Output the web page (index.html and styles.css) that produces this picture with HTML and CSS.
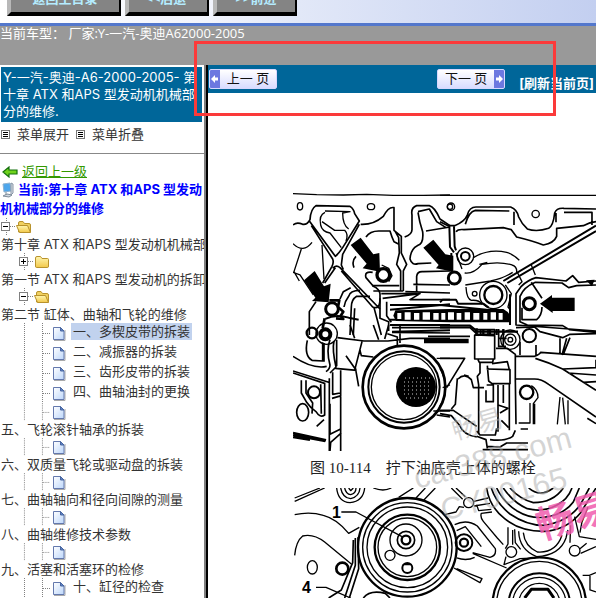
FILE: index.html
```html
<!DOCTYPE html>
<html lang="zh-CN">
<head>
<meta charset="utf-8">
<title>奥迪A6 维修手册</title>
<link rel="stylesheet" href="styles.css">
</head>
<body>
<svg class="defs" aria-hidden="true">
  <defs>
    <linearGradient id="gold" x1="0" y1="0" x2="0" y2="1"><stop offset="0" stop-color="#fff6b0"/><stop offset="1" stop-color="#f2c84a"/></linearGradient>
    <linearGradient id="paper" x1="0" y1="0" x2="1" y2="1"><stop offset="0" stop-color="#fff"/><stop offset="1" stop-color="#bcd6fa"/></linearGradient>
    <symbol id="box" viewBox="0 0 18 18"><path d="M9.500 0V18M13 8.500H18" class="dots"/><rect x="4.500" y="4.500" width="8" height="8" fill="#fff" stroke="#808080"/><path d="M6 8.500H11" stroke="#000"/></symbol>
    <symbol id="plus" viewBox="0 0 18 18"><path d="M9.500 0V18M13 8.500H18" class="dots"/><rect x="4.500" y="4.500" width="8" height="8" fill="#fff" stroke="#808080"/><path d="M6 8.500H11M8.500 6V11" stroke="#000"/></symbol>
    <symbol id="line" viewBox="0 0 18 20"><path d="M9.500 0V20" class="dots"/></symbol>
    <symbol id="branch" viewBox="0 0 18 20"><path d="M9.500 0V20M10 10.500H18" class="dots"/></symbol>
    <symbol id="open" viewBox="0 0 18 18"><path d="M3.500 14V5Q3.500 3.500 5 3.500H8L9.500 5.500H14Q15.500 5.500 15.500 7V14Z" fill="#f0d060" stroke="#b8922c"/><path d="M4.500 14.500 1.500 7.500H12.500L15.500 14.500Z" fill="url(#gold)" stroke="#b8922c"/></symbol>
    <symbol id="folder" viewBox="0 0 18 18"><path d="M2.500 13V5Q2.500 3.500 4 3.500H7.500L9 5.500H14.500Q15.500 5.500 15.500 6.500V13Q15.500 14.500 14.500 14.500H3.500Q2.500 14.500 2.500 13Z" fill="url(#gold)" stroke="#b8922c"/></symbol>
    <symbol id="doc" viewBox="0 0 18 18"><path d="M3 16.500H14V6" stroke="#aaa" fill="none"/><path d="M2.500 3.500H9.500L13 7V15.500H2.500Z" fill="url(#paper)" stroke="#6378ad"/><path d="M9.500 3.500V7H13Z" fill="#5d82c8" stroke="#49669f"/></symbol>
    <symbol id="list" viewBox="0 0 9 9"><rect x=".5" y=".5" width="8" height="8" fill="#fff" stroke="#777"/><path d="M2 2.500H7M2 4.500H7M2 6.500H7" stroke="#000"/></symbol>
  </defs>
</svg>

<header class="toolbar">
  <button class="tool">返回主目录</button>
  <button class="tool">&lt;&lt;后退-</button>
  <button class="tool">&gt;&gt;前进</button>
</header>
<div class="model">当前车型： 厂家:Y-一汽-奥迪A62000-2005</div>

<div class="frames">
  <nav class="side">
    <h1 class="chapter">Y-一汽-奥迪-A6-2000-2005- 第<br>十章 ATX 和APS 型发动机机械部<br>分的维修.</h1>
    <div class="fold">
      <button class="plain"><svg class="list"><use href="#list"/></svg>菜单展开</button>
      <button class="plain"><svg class="list"><use href="#list"/></svg>菜单折叠</button>
    </div>
    <div class="back">
      <svg class="arrow" viewBox="0 0 16 12"><path d="M1 6 7 1V4H15V8H7V11Z" fill="#6fd21c" stroke="#14700c" stroke-width="1.200"/></svg>
      <a href="#up">返回上一级</a>
    </div>
    <div class="current"><svg class="pc" viewBox="0 0 14 16"><path d="M2 2 9 1 10 9 3 10Z" fill="#4da6ec" stroke="#8fb2cf"/><path d="M10 1 12 2V11L10 13Z" fill="#d9e0e8" stroke="#8996a5"/><path d="M5 10V13M2 14 6 12 11 13 8 15Z" fill="#cdd6df" stroke="#7f8c9a"/></svg>当前:第十章 ATX 和APS 型发动<br>机机械部分的维修</div>
    <ul class="tree">
      <li><div class="icons"><svg class="edge"><use href="#box" x="-3" width="18" height="18"/></svg><svg class="cell"><use href="#open"/></svg></div><a href="#c10">第十章 ATX 和APS 型发动机机械部</a></li>
      <li><div class="icons"><i class="edge"></i><svg class="cell"><use href="#plus"/></svg><svg class="cell"><use href="#folder"/></svg></div><a href="#s1">第一节 ATX 和APS 型发动机的拆卸</a></li>
      <li><div class="icons"><i class="edge"></i><svg class="cell"><use href="#box"/></svg><svg class="cell"><use href="#open"/></svg></div><a href="#s2">第二节 缸体、曲轴和飞轮的维修</a></li>
      <li class="inline"><i class="edge"></i><svg class="cell"><use href="#line"/></svg><svg class="cell"><use href="#branch"/></svg><svg class="cell"><use href="#doc"/></svg><a class="selected" href="#p1">一、多楔皮带的拆装</a></li>
      <li class="inline"><i class="edge"></i><svg class="cell"><use href="#line"/></svg><svg class="cell"><use href="#branch"/></svg><svg class="cell"><use href="#doc"/></svg><a href="#p2">二、减振器的拆装</a></li>
      <li class="inline"><i class="edge"></i><svg class="cell"><use href="#line"/></svg><svg class="cell"><use href="#branch"/></svg><svg class="cell"><use href="#doc"/></svg><a href="#p3">三、齿形皮带的拆装</a></li>
      <li class="inline"><i class="edge"></i><svg class="cell"><use href="#line"/></svg><svg class="cell"><use href="#branch"/></svg><svg class="cell"><use href="#doc"/></svg><a href="#p4">四、曲轴油封的更换</a></li>
      <li><div class="icons"><i class="edge"></i><svg class="cell"><use href="#line"/></svg><svg class="cell"><use href="#branch"/></svg><svg class="cell"><use href="#doc"/></svg></div><a href="#p5">五、飞轮滚针轴承的拆装</a></li>
      <li><div class="icons"><i class="edge"></i><svg class="cell"><use href="#line"/></svg><svg class="cell"><use href="#branch"/></svg><svg class="cell"><use href="#doc"/></svg></div><a href="#p6">六、双质量飞轮或驱动盘的拆装</a></li>
      <li><div class="icons"><i class="edge"></i><svg class="cell"><use href="#line"/></svg><svg class="cell"><use href="#branch"/></svg><svg class="cell"><use href="#doc"/></svg></div><a href="#p7">七、曲轴轴向和径向间隙的测量</a></li>
      <li><div class="icons"><i class="edge"></i><svg class="cell"><use href="#line"/></svg><svg class="cell"><use href="#branch"/></svg><svg class="cell"><use href="#doc"/></svg></div><a href="#p8">八、曲轴维修技术参数</a></li>
      <li><div class="icons"><i class="edge"></i><svg class="cell"><use href="#line"/></svg><svg class="cell"><use href="#branch"/></svg><svg class="cell"><use href="#doc"/></svg></div><a href="#p9">九、活塞和活塞环的检修</a></li>
      <li class="inline"><i class="edge"></i><svg class="cell"><use href="#line"/></svg><svg class="cell"><use href="#branch"/></svg><svg class="cell"><use href="#doc"/></svg><a href="#p10">十、缸径的检查</a></li>
    </ul>
  </nav>

  <main class="content">
    <div class="pager">
      <button class="page prev"><svg class="tip" viewBox="0 0 10 16"><path d="M1 8 5 4V6.500H8V9.500H5V12Z" fill="#fff"/></svg><span>上一 页</span></button>
      <button class="page next"><span>下一 页</span><svg class="tip" viewBox="0 0 10 16"><path d="M9 8 5 4V6.500H2V9.500H5V12Z" fill="#fff"/></svg></button>
      <a class="refresh" href="#refresh">[刷新当前页]</a>
    </div>
    <figure class="scan">
      <svg class="drawing" viewBox="293 190 303 261" role="img" aria-label="油底壳上体螺栓位置">
        <g class="ink" transform="translate(290 185) scale(.3333)">
          <path d="M9 26 80 29 160 30 230 28 310 31 400 31 480 30"/>
          <ellipse cx="30" cy="64" rx="8" ry="11"/><ellipse cx="243" cy="65" rx="11" ry="9"/><circle cx="480" cy="65" r="8"/>
          <path d="M9 120Q20 110 38 118Q52 120 60 104Q62 72 78 62L180 64Q192 72 194 86L208 108 158 188Q146 206 136 214L58 108M64 122 128 222Q132 232 126 244L98 294M208 118 158 208 154 240 160 254" stroke-width="5"/>
          <path d="M105 78 180 80 158 84 Q158 120 176 132M105 82Q86 90 92 120Q96 140 120 144L154 188M96 110 134 136H164Q176 148 168 168"/>
          <path d="M128 250Q138 238 150 248L270 372M104 294 136 248M154 258 248 366Q270 376 270 340V326Q268 312 250 304L228 278Q222 258 248 262M212 118Q250 120 280 94Q296 64 312 68V136L334 154V204L350 238 340 258V318M316 140 326 158 328 204 320 238 332 258V318M228 156Q240 138 266 138H300Q306 158 312 170 326 176 328 180M198 214Q184 228 192 248" stroke-width="5"/>
          <path d="M9 176Q40 206 66 172M34 192 12 260 28 288M9 262 30 270 70 330M96 180 102 282"/>
          <path d="M480 122 450 102Q434 66 418 62H380Q362 68 366 90V134Q366 148 344 156M384 80 418 72 440 110 468 128M384 82Q388 110 398 140Q402 178 382 182Q362 192 360 222Q366 242 384 236L424 234M408 138 480 126M380 320V274Q382 258 400 260L480 258M346 320 480 324M370 298 480 300" stroke-width="5"/>
          <path d="M246 302H328M250 318H340M182 308 160 320 150 342M210 316Q180 316 176 334 164 350 162 366M240 334H200Q184 344 184 366L180 450M194 370 190 450M274 326H380M278 340 390 326 360 344H480M270 340V400L296 410V438M290 350V392L304 412 M252 368 274 450M78 350 58 380V450" stroke-width="5"/>
          <circle cx="280" cy="270" r="19" stroke-width="10"/><path d="M275 240 296 250 306 272 296 290"/>
          <circle cx="126" cy="372" r="19" stroke-width="9"/><path d="M118 346H148L144 366 160 380 152 392 160 402 138 400M104 400 98 430" stroke-width="8"/>
          <path d="M106 402Q136 386 176 398L206 404M300 360H480M300 374 480 358M300 404H480M300 420H480M306 440 480 436" stroke-width="6"/>
        </g>
        <g class="solid" transform="translate(290 185) scale(.3333)">
          <path d="M182 180 212 158 250 208 268 204 270 260 218 250 230 236ZM400 188 430 164 466 208 490 212 490 260 438 250 446 240ZM42 286 74 258 102 304 122 296 116 352 66 348 76 338Z"/>
          <path d="M316 376 480 372H640Q652 378 660 390V412H480L318 408 310 392Z"/>
        </g>
        <g class="cells" transform="translate(290 185) scale(.3333)"><path d="M322 384H334V402H322ZM344 382H362V404H344ZM372 384H388V404H372ZM398 382H420V404H398ZM430 384H446V404H430ZM454 384H466V404H454ZM474 382H492V404H474ZM500 384H514V404H500ZM524 382H540V404H524ZM550 384H568V404H550ZM580 384H592V404H580ZM602 382H618V404H602ZM626 384H638V404H626Z"/></g>

        <g class="ink" transform="translate(440 185) scale(.3333)">
          <path d="M0 31H468"/><circle cx="33" cy="65" r="11"/><circle cx="287" cy="87" r="11"/>
          <path d="M0 110 24 122H44Q74 110 82 90Q88 66 108 66H212Q232 74 236 96 246 118 262 132 290 142 326 130 340 122 344 84 350 68 372 70L468 72M76 118Q86 80 106 76L208 78 M48 140Q54 132 72 134L190 128 214 134 230 156Q280 168 310 180 342 174 350 154V130L430 122Q450 112 468 110M222 80V120M372 82H456V120M348 84V112" stroke-width="5"/>
          <path d="M28 122 30 186 42 202M42 124 44 184 48 196M34 204V264" stroke-width="6"/>
          <circle cx="76" cy="214" r="25"/><circle cx="76" cy="214" r="13" stroke-width="6"/><circle cx="43" cy="279" r="18" stroke-width="9"/>
          <path d="M100 218Q146 190 200 202 220 208 238 226M74 264Q100 268 126 238 180 228 216 240 232 244 230 264M118 238 142 232M48 204 66 252M76 300 152 288Q190 280 218 262"/>
          <path d="M468 122 190 288M468 138 202 294" stroke-width="6"/><path d="M232 262 246 290 236 300M274 240 286 270"/>
          <circle cx="104" cy="326" r="7"/><circle cx="160" cy="330" r="27" stroke-width="7"/><circle cx="160" cy="330" r="41"/><path d="M78 306Q80 342 94 346 118 344 126 358M196 300 214 326 204 366 210 374"/>
          <path d="M468 288 416 292 398 272 378 288 288 278Q262 286 244 304L228 326V420L468 438M468 300 410 302 386 308 366 294 286 292Q252 306 240 334V410L262 420 368 422 388 434 468 442M274 292 306 340M246 368V404H290Q306 390 306 366" stroke-width="5"/>
          <circle cx="268" cy="356" r="18" stroke-width="9"/><path d="M210 328V420M0 352 8 344H48L54 356H130L146 368M0 360 140 374" stroke-width="6"/>
          <path d="M0 422H90L112 440H234M110 430V450M130 432V450M150 432V450M170 432V450M190 432V450" stroke-width="7"/>
        </g>
        <path class="solid" transform="translate(440 185) scale(.3333)" d="M300 356 336 330V338H404V378H338V384ZM438 286 464 284 456 304Z"/>

        <g class="ink" transform="translate(290 325) scale(.3333)">
          <circle cx="66" cy="24" r="16" stroke-width="7"/><circle cx="106" cy="28" r="15" stroke-width="12"/><circle cx="110" cy="26" r="32"/>
          <path d="M52 46Q42 92 66 106L98 108V52M102 54V110M120 44Q108 76 120 120 120 132 108 140M132 48Q126 74 138 126L120 144M136 130 200 136M142 38 222 48H294L360 40H480M140 44V124M216 50 196 128 206 184M168 92 196 132M180 0 194 40M250 0 266 44M296 0 284 42M210 76 214 92 250 96M292 26 322 36V60M306 8H480M306 22 480 24M330 0V54" stroke-width="5"/>
          <path d="M9 94Q70 134 110 124M9 138 116 172M9 144 106 176M104 174V270Q90 280 78 260 62 250 50 232L34 204V166M118 160V378M152 136V378M128 142V208L150 204M126 220 154 212M120 236V328L152 312M48 166V204L68 234 66 266M92 178 94 266M80 304 102 284M120 378 122 352 154 324" stroke-width="5"/>
          <circle cx="72" cy="202" r="18" stroke-width="6"/><ellipse cx="38" cy="262" rx="18" ry="26" stroke-width="5"/><path d="M9 324 108 346M9 330 106 348M9 336 60 344" stroke-width="8"/>
          <circle cx="342" cy="186" r="124" stroke-width="8"/><circle cx="342" cy="186" r="107" stroke-width="6"/><circle cx="342" cy="186" r="98"/>
          <path d="M440 100H480M458 188 480 180M440 270 480 276M430 258H480"/>
        </g>
        <circle cx="416" cy="387" r="20"/>
        <path class="mesh" d="M405 378H430M404 382H432M404 386H432M404 390H432M404 394H431M406 398H429"/>

        <g class="ink" transform="translate(440 325) scale(.3333)">
          <path d="M-36 34H90M-36 48H80" stroke-width="5"/><path d="M-48 48H86" stroke-width="14"/><path d="M0 8H90L116 32M104 30V102H164V32ZM114 104 118 112H158L160 102M108 14H164V28H108ZM122 16V28M144 16V28M176 12V66M190 14V66M174 40H200M174 64H198" stroke-width="5"/>
          <circle cx="211" cy="44" r="7"/><circle cx="211" cy="44" r="17"/><circle cx="211" cy="44" r="29"/><path d="M168 70H202L226 88V170M120 114V144L112 154 116 180V328M142 122 146 168 156 176H210V134L140 132M156 116 202 110 208 134M226 164 228 298M140 180H160V230H138V196M174 180V320M190 180V234M208 178V316" stroke-width="5"/>
          <circle cx="268" cy="32" r="20" stroke-width="6"/><path d="M228 8 284 6 300 20 368 38 390 28 468 26M380 40 366 90 M390 38 370 88M240 50V90M228 94H284Q300 88 302 82L468 94M288 94V60M360 40V86M286 100Q326 112 368 132L468 196M228 162H284Q304 162 326 178L468 276M368 132 468 128M384 144 468 150M430 172 468 170M468 104V130M442 280 468 296" stroke-width="5"/>
          <circle cx="260" cy="202" r="20" stroke-width="7"/><path d="M274 182Q294 194 294 218L280 236V298M270 234V294H236M284 236V298M360 216 352 298M368 218 376 298M384 226 384 298M242 312H264"/>
          <path d="M0 100H74L20 188M0 130Q18 160 16 192T0 244M52 160 46 238 34 252M54 162Q74 142 94 164L100 188H132M72 150 86 154M0 256H40L110 304M0 266 34 272 58 300Q70 330 110 336M110 318 120 330H166L170 310M174 240 204 250 180 264M184 286 206 308M110 334 138 344 142 370M150 344Q196 350 218 334L226 316M140 364 180 366 200 354H264M128 374H264" stroke-width="5"/>
        </g>
      </svg>
      <figcaption>图 10-114　拧下油底壳上体的螺栓</figcaption>
      <svg class="drawing" viewBox="293 488 303 110" role="img" aria-label="皮带轮分解图">
        <g class="ink" transform="translate(290 470) scale(.3333)">
          <path d="M14 84 90 54M14 94 104 54M14 134Q60 124 100 136 140 146 176 190L208 172M14 256Q18 214 38 198 70 190 104 216L184 282M326 82 370 54M378 84 406 54M398 94 436 54M140 54Q144 96 180 98 220 94 224 54M152 54Q158 84 182 86 208 80 210 54M164 54Q168 72 182 74 198 70 198 54M176 54 182 62 190 54M250 54Q280 66 304 54" />
          <circle cx="352" cy="232" r="148" stroke-width="7"/><circle cx="352" cy="232" r="134"/><circle cx="352" cy="232" r="121"/><circle cx="352" cy="232" r="98" stroke-width="7"/><circle cx="352" cy="232" r="88"/><circle cx="348" cy="210" r="48"/><circle cx="348" cy="210" r="26" stroke-width="5"/><circle cx="348" cy="210" r="13" stroke-width="7"/>
          <circle cx="300" cy="256" r="15"/><circle cx="352" cy="294" r="15" stroke-width="6"/><path d="M338 284H366M154 126H198L336 200M78 352H108L182 384"/>
          <ellipse cx="67" cy="292" rx="15" ry="20"/><circle cx="157" cy="296" r="18" stroke-width="8"/>
          <path d="M196 204V286L164 384M204 202 206 296 178 384M190 210 188 278 154 360 116 384M220 384Q240 358 286 370L300 384" stroke-width="5"/>
          <circle cx="536" cy="98" r="15"/><circle cx="522" cy="218" r="12" stroke-width="7"/><circle cx="522" cy="218" r="25" stroke-width="6"/>
          <path d="M484 54 518 88M498 54 526 80M464 134 498 126 508 110 522 112M552 94 594 84M552 108 600 100M560 104 566 122 604 118M494 164Q530 146 562 168L616 236Q620 258 600 262L548 248M500 182 526 170 574 230M492 294 570 338 576 326 500 296M500 264Q530 274 554 262M548 250 650 294"/>
          <path d="M590 54Q598 110 644 146 690 184 762 184 830 180 872 128L918 54M604 54Q618 98 660 132 710 166 760 166 830 158 870 106L898 54M620 54Q640 96 680 122 720 146 760 142 820 136 850 96L868 54M640 54Q670 98 712 116 760 128 800 106 834 88 846 54M660 54Q690 88 730 98 790 98 820 54M716 54Q750 84 790 54" stroke-width="5"/>
          <path d="M606 126 574 130Q570 142 580 154L622 204 640 224 M654 172V222L646 236M668 180V224M686 184Q688 240 740 260 810 256 828 204L834 180M700 188Q704 228 742 246 798 250 816 196M674 178 676 218 692 238M842 166 840 218M854 140 868 200 918 208M894 112 876 156 870 188"/>
          <circle cx="664" cy="246" r="16"/><circle cx="854" cy="242" r="16"/><path d="M648 260 642 284 690 266 736 264M872 250 918 230M870 236 890 220M878 316H898L918 308M900 318V360L918 366"/>
          <circle cx="748" cy="402" r="140" stroke-width="7"/><circle cx="748" cy="402" r="128"/><circle cx="748" cy="402" r="92" stroke-width="6"/><circle cx="748" cy="402" r="80"/><circle cx="748" cy="402" r="62"/><path d="M704 384 724 358H774L792 384" stroke-width="9"/>
        </g>
        <text class="mark" x="332" y="518">1</text><text class="mark" x="302" y="593">4</text>
      </svg>
      <svg class="watermark" viewBox="293 190 303 408" aria-hidden="true">
        <g class="grey">
          <text class="w26" transform="translate(455 440) rotate(-16)">畅易</text>
          <text class="w31" transform="translate(417 489) rotate(-15)">car388.com</text>
          <text class="w31" transform="translate(444 521) rotate(-15)">CY00165</text>
        </g>
        <text class="pink" transform="translate(541 540) rotate(-17)">畅易</text>
      </svg>
    </figure>
  </main>
</div>
<div class="callout"></div>
</body>
</html>
```
FILE: styles.css
```css
* { box-sizing: border-box; }

body {
  margin: 0;
  height: 100vh;
  overflow: hidden;
  display: flex;
  flex-direction: column;
  background: #fff;
  color: #333;
  font: 13px/17px "Open Sans", "Noto Sans CJK SC", sans-serif;
}

button {
  font: inherit;
  color: inherit;
  white-space: nowrap;
}

a { color: inherit; text-decoration: none; }

.defs { position: absolute; width: 0; height: 0; }
.dots { fill: none; stroke: #808080; stroke-dasharray: 1 1; }

.toolbar {
  flex: none;
  display: flex;
  align-items: flex-end;
  gap: 4px;
  height: 26px;
  padding: 0 7px 7px;
  overflow: hidden;
  background: linear-gradient(90deg, #fff 0, #f2f4fc 35%, #e2e8f8 50%, #c3cff0 100%);
  border-bottom: 3px solid #5377cc;
}

.tool {
  flex: none;
  width: 84px;
  height: 34px;
  padding: 0;
  background: #848484;
  border: 4px solid #000;
  border-width: 3px 2px 4px 4px;
  border-left-color: #b8b8b8;
  border-top-color: #b8b8b8;
  color: #b4ecff;
  font-weight: bold;
}

.tool:first-child { width: 114px; }

.model {
  flex: none;
  height: 39px;
  background: #999;
  color: #fff;
  line-height: 15px;
}

.frames { flex: 1; min-height: 0; display: flex; }

.side {
  flex: none;
  width: 204px;
  overflow: hidden;
  white-space: nowrap;
  font-family: "Inter", "Noto Sans CJK SC", sans-serif;
}

.chapter {
  margin: 2px 2px 0 1px;
  padding: 2px;
  background: #069;
  color: #fff;
  font-size: 13px;
  font-weight: normal;
}

.fold {
  display: flex;
  gap: 7px;
  height: 32px;
  padding: 4px 1px;
  align-items: flex-start;
  border-bottom: 1px solid #888;
}

.plain {
  display: flex;
  align-items: center;
  gap: 7px;
  padding: 0;
  border: 0;
  background: none;
}

.list { width: 9px; height: 9px; }

.back {
  display: flex;
  align-items: center;
  gap: 4px;
  padding: 9px 2px 0;
  color: #390;
}

.back a { text-decoration: underline; }
.arrow { width: 16px; height: 12px; }

.current {
  color: #00f;
  font-weight: bold;
  line-height: 19px;
}

.pc {
  width: 14px;
  height: 16px;
  margin: 0 3px 0 1px;
  vertical-align: middle;
}

.tree { margin: 0; padding: 0; list-style: none; }
.tree li > a { display: block; padding-left: 1px; }
.icons { display: flex; height: 18px; }
.edge { flex: none; width: 15px; height: 18px; overflow: hidden; }
.cell { flex: none; width: 18px; height: 100%; }

.inline { display: flex; align-items: flex-start; height: 20px; }
.tree .inline > a { margin-left: 2px; padding: 0 2px; }
.tree .inline > .selected { background: #c1d2ee; }

.content {
  flex: 1;
  min-width: 0;
  overflow: hidden;
  padding-left: 4px;
  background: linear-gradient(90deg, #808080 0 2px, #000 2px 4px) 0 0 / 4px 100% no-repeat;
}

.pager {
  display: flex;
  align-items: center;
  height: 28px;
  padding: 0 2px 0 1px;
  background: #069;
}

.page {
  display: flex;
  align-items: stretch;
  width: 68px;
  height: 20px;
  padding: 0;
  overflow: hidden;
  border: 1px solid #d8d8ff;
  border-radius: 2px;
  background: linear-gradient(#fff, #d8dcff);
  color: #111;
}

.page span { flex: 1; }
.tip { width: 10px; height: 18px; background: #6c78e0; }
.next { margin-left: auto; }

.refresh {
  margin: 9px 0 0 14px;
  color: #fff;
  font-family: "Inter", "Noto Sans CJK SC", sans-serif;
  font-weight: bold;
}

.scan {
  position: relative;
  margin: 97px 0 0 85px;
  color: #222;
}

.drawing { display: block; width: 100%; }
.ink { fill: none; stroke: #000; stroke-width: 4; stroke-linejoin: round; }
.solid { fill: #000; }
.cells { fill: #fff; }
.mesh { fill: none; stroke: #ccc; stroke-width: 1; stroke-dasharray: 1 3; }
.mark { font: bold 16px "Liberation Sans", sans-serif; }

figcaption {
  height: 37px;
  padding-left: 17px;
  font: 15px/35px "Liberation Serif", "Noto Sans CJK SC", serif;
  white-space: nowrap;
}

.watermark { position: absolute; left: 0; top: 0; width: 100%; height: 100%; }
.grey { fill: #aaa; fill-opacity: .5; }
.w26 { font: 26px "Noto Sans CJK SC", sans-serif; }
.w31 { font: 31px "Liberation Sans", sans-serif; }
.pink { fill: #f05cae; fill-opacity: .85; font: bold 38px "Noto Sans CJK SC", sans-serif; }

.callout {
  position: absolute;
  left: 194px;
  right: 40px;
  top: 41px;
  height: 75px;
  border: 3px solid #fb3a3a;
  pointer-events: none;
}
```
